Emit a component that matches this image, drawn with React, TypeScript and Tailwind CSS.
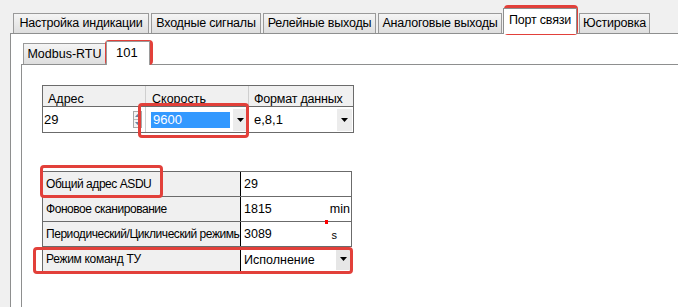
import React from "react";

const font = { fontFamily: '"Liberation Sans", Arial, sans-serif' };

function Tab({ label, w, selected }: { label: string; w: number; selected?: boolean }) {
  if (selected) {
    return (
      <div
        className="relative z-10 -mb-px mx-[-1px] h-[26px] flex items-center justify-center border border-b-0 border-[#8e8f8f] bg-white text-[12.5px] text-black whitespace-nowrap tracking-[-0.2px]"
        style={{ width: w }}
      >
        <span className="-mt-[3px]">{label}</span>
      </div>
    );
  }
  return (
    <div
      className="h-[20px] mr-[2px] flex items-center justify-center border border-b-0 border-[#9a9a9a] bg-gradient-to-b from-[#f5f5f5] to-[#dedede] text-[12.5px] text-black whitespace-nowrap tracking-[-0.2px]"
      style={{ width: w }}
    >
      {label}
    </div>
  );
}

function Arrow({ className = "" }: { className?: string }) {
  return (
    <svg width="7" height="4" viewBox="0 0 7 4" className={className}>
      <path d="M0 0h7L3.5 4z" fill="#000" />
    </svg>
  );
}

function RedBox({ className }: { className: string }) {
  return <div className={"absolute border-[3px] border-[#e2403a] rounded-[4px] pointer-events-none " + className} />;
}

export default function App() {
  return (
    <div className="relative w-[678px] h-[307px] overflow-hidden bg-[#f0f0f0] text-[12px] text-black" style={font}>
      {/* top tab strip */}
      <div className="flex items-end h-[33px] pl-[13px]">
        <Tab label="Настройка индикации" w={136} />
        <Tab label="Входные сигналы" w={110} />
        <Tab label="Релейные выходы" w={113} />
        <Tab label="Аналоговые выходы" w={124} />
        <Tab label="Порт связи" w={74} selected />
        <div className="w-[3px]" />
        <Tab label="Юстировка" w={71} />
      </div>

      {/* outer panel */}
      <div className="ml-[10px] h-[274px] border-l border-t border-[#8e8f8f] bg-white">
        {/* inner tab strip */}
        <div className="flex items-end h-[30px] pl-[12px]">
          <div className="h-[21px] w-[83px] flex items-center justify-center border border-b-0 border-[#9a9a9a] bg-gradient-to-b from-[#f5f5f5] to-[#dedede] text-[12.5px] whitespace-nowrap">
            Modbus-RTU
          </div>
          <div className="relative z-10 -mb-px h-[24px] w-[44px] border border-b-0 border-[#9a9a9a] bg-white text-[13px] pl-[9px] pt-[1px]">
            101
          </div>
        </div>
        {/* inner panel */}
        <div className="ml-[10px] h-[250px] border-l border-t border-[#8e8f8f] bg-white pt-[20px] pl-[20px]">
          {/* table 1 */}
          <div className="w-[312px] border border-[#6b6b6b]">
            <div className="flex h-[21px] bg-[#f0f0f0] border-b border-[#6b6b6b] text-[12.5px] whitespace-nowrap">
              <div className="w-[103px] border-r border-[#cfcfcf] pl-[5px] pt-[4px]">Адрес</div>
              <div className="w-[103px] border-r border-[#cfcfcf] pl-[6px] pt-[4px]">Скорость</div>
              <div className="flex-1 pl-[5px] pt-[4px] tracking-[-0.2px]">Формат данных</div>
            </div>
            <div className="flex h-[25px] text-[13px]">
              <div className="w-[103px] flex items-center justify-between border-r border-[#cfcfcf]">
                <span className="pl-[1px]">29</span>
                <div className="mr-[3px] w-[9px] h-[17px] flex flex-col border border-[#a8a8a8] bg-[#f4f4f4]">
                  <div className="flex-1 flex items-center justify-center border-b border-[#b8b8b8]">
                    <svg width="5" height="3" viewBox="0 0 5 3"><path d="M0 3h5L2.5 0z" fill="#6f86a0" /></svg>
                  </div>
                  <div className="flex-1 flex items-center justify-center">
                    <svg width="5" height="3" viewBox="0 0 5 3"><path d="M0 0h5L2.5 3z" fill="#6f86a0" /></svg>
                  </div>
                </div>
              </div>
              <div className="w-[103px] flex items-center border-r border-[#cfcfcf]">
                <div className="ml-[5px] w-[79px] h-[16px] bg-[#3399ff] text-white flex items-center pl-[2px]">9600</div>
                <div className="ml-[3px] w-[15px] h-[22px] bg-[#ececec] flex items-center justify-center">
                  <Arrow />
                </div>
              </div>
              <div className="flex-1 flex items-center justify-between">
                <span className="pl-[5px]">e,8,1</span>
                <div className="w-[15px] h-[22px] bg-[#ececec] flex items-center justify-center mr-[1px]">
                  <Arrow />
                </div>
              </div>
            </div>
          </div>

          {/* table 2 */}
          <div className="mt-[38px] w-[310px] border-l border-t border-[#6b6b6b] text-[12px]">
            {[
              ["Общий адрес ASDU", "29", ""],
              ["Фоновое сканирование", "1815", "min"],
              ["Периодический/Циклический режимь", "3089", "s"],
            ].map(([l, v, u]) => (
              <div key={l} className="flex h-[25px] border-b border-[#6b6b6b]">
                <div className="w-[198px] bg-[#f0f0f0] border-r border-black pl-[3px] flex items-center whitespace-nowrap overflow-hidden tracking-[-0.45px]">
                  {l}
                </div>
                <div className="flex-1 flex items-center justify-between border-r border-[#6b6b6b] pl-[3px] pr-[1px] text-[12.5px]">
                  <span>{v}</span>
                  <span className={u === "s" ? "mr-[13px] mt-[3px] text-[11px]" : ""}>{u}</span>
                </div>
              </div>
            ))}
            <div className="flex h-[24px]">
              <div className="w-[198px] bg-[#f0f0f0] border-r border-black pl-[3px] flex items-center tracking-[-0.3px]">Режим команд ТУ</div>
              <div className="flex-1 flex items-center justify-between pl-[3px] text-[12.5px]">
                <span className="mt-[2px]">Исполнение</span>
                <div className="w-[15px] h-[22px] bg-[#e6e6e6] flex items-center justify-center mr-[1px]">
                  <Arrow />
                </div>
              </div>
            </div>
          </div>
        </div>
      </div>

      {/* red dot */}
      <div className="absolute left-[325px] top-[220px] w-[3px] h-[4px] bg-[#ff0000]" />

      {/* annotation boxes */}
      <RedBox className="left-[504px] top-[5px] w-[74px] h-[30px]" />
      <RedBox className="left-[105px] top-[40px] w-[48px] h-[25px]" />
      <RedBox className="left-[138px] top-[103px] w-[111px] h-[35px]" />
      <RedBox className="left-[40px] top-[165px] w-[123px] h-[33px]" />
      <RedBox className="left-[33px] top-[247px] w-[320px] h-[27px]" />
    </div>
  );
}
